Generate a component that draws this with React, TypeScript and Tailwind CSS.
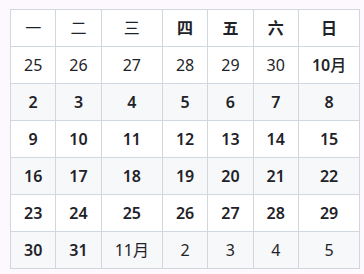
const headers = [
  { label: '一', bold: false },
  { label: '二', bold: false },
  { label: '三', bold: false },
  { label: '四', bold: true },
  { label: '五', bold: true },
  { label: '六', bold: true },
  { label: '日', bold: true },
]

type Day = { label: string; current: boolean }

const weeks: Day[][] = [
  [
    { label: '25', current: false },
    { label: '26', current: false },
    { label: '27', current: false },
    { label: '28', current: false },
    { label: '29', current: false },
    { label: '30', current: false },
    { label: '10月', current: true },
  ],
  ['2', '3', '4', '5', '6', '7', '8'].map((d) => ({ label: d, current: true })),
  ['9', '10', '11', '12', '13', '14', '15'].map((d) => ({ label: d, current: true })),
  ['16', '17', '18', '19', '20', '21', '22'].map((d) => ({ label: d, current: true })),
  ['23', '24', '25', '26', '27', '28', '29'].map((d) => ({ label: d, current: true })),
  [
    { label: '30', current: true },
    { label: '31', current: true },
    { label: '11月', current: false },
    { label: '2', current: false },
    { label: '3', current: false },
    { label: '4', current: false },
    { label: '5', current: false },
  ],
]

export default function App() {
  return (
    <div
      className="min-h-screen bg-[#fdf8fd] pl-[10px] pt-[9px] text-[16px] leading-[24px] text-[#1f2328]"
      style={{ fontFamily: '"Noto Sans", "Noto Sans CJK SC", sans-serif' }}
    >
      <table className="border-collapse">
        <thead>
          <tr className="bg-white">
            {headers.map((h) => (
              <th
                key={h.label}
                className={
                  'border border-[#d0d7de] px-[13px] py-[6px] text-center ' +
                  (h.bold ? 'font-semibold' : 'font-normal')
                }
              >
                {h.label}
              </th>
            ))}
          </tr>
        </thead>
        <tbody>
          {weeks.map((week, i) => (
            <tr key={i} className={i % 2 === 1 ? 'bg-[#f6f8fa]' : 'bg-white'}>
              {week.map((d, j) => (
                <td
                  key={j}
                  className={
                    'border border-[#d0d7de] px-[13px] py-[6px] text-center ' +
                    (d.current ? 'font-[560]' : 'font-normal')
                  }
                >
                  {d.label}
                </td>
              ))}
            </tr>
          ))}
        </tbody>
      </table>
    </div>
  )
}
